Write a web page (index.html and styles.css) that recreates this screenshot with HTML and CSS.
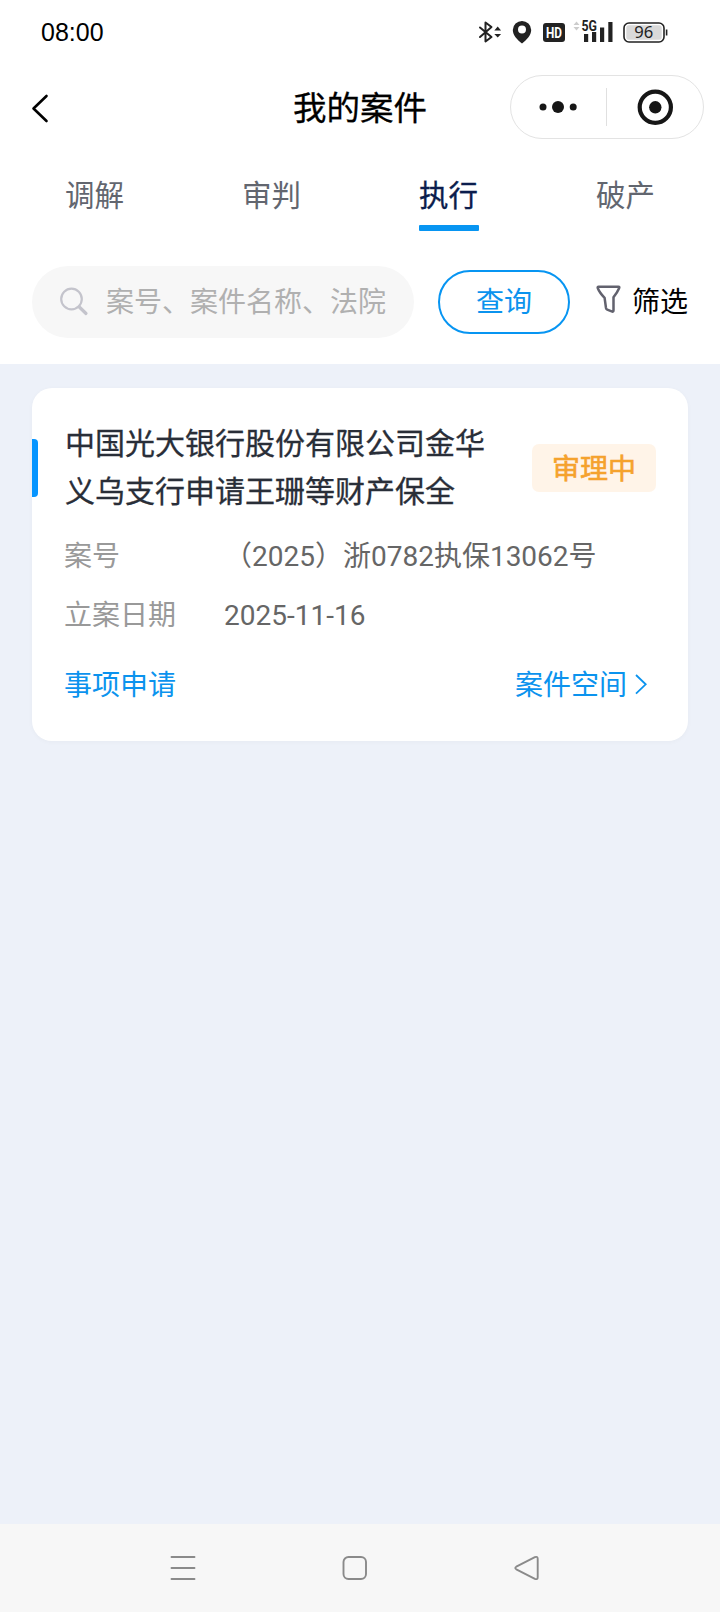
FILE: index.html
```html
<!DOCTYPE html>
<html lang="zh-CN">
<head>
<meta charset="utf-8">
<title>我的案件</title>
<link rel="stylesheet" href="styles.css">
</head>
<body>
<div class="app">
  <header class="status">
    <span class="clock">08:00</span>
    <svg class="status-icons" width="196" height="32" viewBox="476 16 196 32">
      <g fill="none" stroke="#222" stroke-width="2" stroke-linejoin="round" stroke-linecap="round">
        <path d="M480 27.500L491.500 37L485.500 41.500V22.500L491.500 27L480 37"/>
      </g>
      <path d="M494.300 30.500L497.700 26.500L501.100 30.500ZM494.300 34L497.700 37.500L501.100 34Z" fill="#222"/>
      <path fill-rule="evenodd" d="M522 21A9.200 9.200 0 0 0 512.800 30C512.800 35 517 39.500 522 43.500C527 39.500 531.200 35 531.200 30A9.200 9.200 0 0 0 522 21ZM522 25.500A4 4 0 1 1 522 33.500A4 4 0 1 1 522 25.500Z" fill="#222"/>
      <rect x="543" y="23" width="22" height="19" rx="3" fill="#222"/>
      <text x="546" y="38" class="hd" textLength="16" lengthAdjust="spacingAndGlyphs">HD</text>
      <path d="M573.500 25L576.500 21.500L579.500 25ZM573.500 27L576.500 30.500L579.500 27Z" fill="#ccc"/>
      <text x="581.500" y="31" class="net" textLength="15.500" lengthAdjust="spacingAndGlyphs">5G</text>
      <path d="M584 34h4.200v8h-4.200zM592 32h4.200v10h-4.200zM600 27.500h4.200v14.500h-4.200zM608.300 22h4.200v20h-4.200z" fill="#222"/>
      <rect x="624" y="23" width="40" height="19" rx="5" fill="#fff" stroke="#222" stroke-width="1.600"/>
      <rect x="626.300" y="25.300" width="35.400" height="14.400" rx="2.500" fill="#d9d9d9"/>
      <path d="M666.600 29.500v6" stroke="#222" stroke-width="1.600"/>
      <text x="634.300" y="38.300" class="level" textLength="19" lengthAdjust="spacingAndGlyphs">96</text>
    </svg>
  </header>

  <div class="titlebar">
    <svg class="back" width="20" height="32" viewBox="0 0 20 32"><path d="M15.500 4L2.500 16.500L15.500 29" fill="none" stroke="#000" stroke-width="2.600" stroke-linecap="round" stroke-linejoin="round"/></svg>
    <h1 class="title">我的案件</h1>
    <div class="capsule">
      <svg width="96" height="62" viewBox="0 0 96 62"><g fill="#161616"><circle cx="32" cy="31" r="3.500"/><circle cx="47" cy="31" r="6"/><circle cx="62.200" cy="31" r="3.500"/></g></svg>
      <span class="divider"></span>
      <svg width="95" height="62" viewBox="0 0 95 62"><circle cx="48.300" cy="31.300" r="15.600" fill="none" stroke="#161616" stroke-width="4.200"/><circle cx="48.300" cy="31.300" r="6.200" fill="#161616"/></svg>
    </div>
  </div>

  <nav class="tabs">
    <a class="tab">调解</a>
    <a class="tab">审判</a>
    <a class="tab active">执行</a>
    <a class="tab">破产</a>
  </nav>

  <section class="search-row">
    <div class="search">
      <svg width="30" height="30" viewBox="0 0 30 30" fill="none" stroke="#c4c4cc"><circle cx="11.500" cy="12" r="10.300" stroke-width="2.200"/><path d="M19.300 20L26 26.500" stroke-width="3.200" stroke-linecap="round"/></svg>
      <span class="placeholder">案号、案件名称、法院</span>
    </div>
    <button class="query">查询</button>
    <div class="filter">
      <svg width="25" height="29" viewBox="0 0 25 29"><path d="M2.600 1.700H22.400Q23.800 1.700 23.100 3.200Q21.500 7 17.500 12.300V25.200Q17.500 27.200 15.700 26.400L11.200 24.600Q10.200 24.200 10 23L8.600 12.800Q3.500 7.500 1.800 3.200Q1.300 1.700 2.600 1.700Z" fill="none" stroke="#62626e" stroke-width="2.500" stroke-linejoin="round"/></svg>
      <span class="filter-text">筛选</span>
    </div>
  </section>

  <main class="content">
    <article class="card">
      <div class="card-head">
        <span class="marker"></span>
        <h2 class="case-name">中国光大银行股份有限公司金华义乌支行申请王珊等财产保全</h2>
        <span class="badge">审理中</span>
      </div>
      <dl class="info">
        <dt>案号</dt><dd>（2025）浙0782执保13062号</dd>
        <dt>立案日期</dt><dd>2025-11-16</dd>
      </dl>
      <div class="actions">
        <a class="link">事项申请</a>
        <a class="link space">案件空间
          <svg width="12" height="22" viewBox="0 0 12 22"><path d="M1 1L10.700 10.300L1 19.600" fill="none" stroke="#0b93ee" stroke-width="1.800"/></svg>
        </a>
      </div>
    </article>
  </main>

  <footer class="navbar">
    <svg width="26" height="26" viewBox="0 0 26 26"><path d="M1.500 2h23M1.500 13h23M1.500 24h23"/></svg>
    <svg width="26" height="26" viewBox="0 0 26 26"><rect x="1.500" y="2" width="22.500" height="22" rx="5"/></svg>
    <svg width="26" height="26" viewBox="0 0 26 26"><path d="M2.300 11.700L20.900 2.200Q23.700 1 23.700 3.800V22.200Q23.700 25 20.900 23.800L2.300 14.300Q.3 13 2.300 11.700Z"/></svg>
  </footer>
</div>
</body>
</html>
```
FILE: styles.css
```css
* { box-sizing: border-box; }
body { margin: 0; background: #fff; font-family: Roboto, "Noto Sans CJK SC", sans-serif; }
h1, h2, dl, dd { margin: 0; font-weight: 400; }
svg { display: block; flex: none; }
.app { display: flex; flex-direction: column; width: 720px; height: 1612px; overflow: hidden; }

.status { display: flex; justify-content: space-between; height: 64px; padding: 16px 48px 0 41px; }
.clock { font-family: "Liberation Sans", Arial, sans-serif; font-size: 25px; line-height: 33px; color: #000; }
.hd { font: 700 15px Roboto, sans-serif; fill: #fff; }
.net { font: 700 14.500px Roboto, sans-serif; fill: #222; }
.level { font: 400 17px "Noto Sans", sans-serif; fill: #222; }

.titlebar { display: grid; grid-template-columns: 209px 240px 1fr; align-items: center; height: 86px; padding: 0 16px 0 31px; }
.back { margin-top: 1px; }
.title { padding-top: 3px; font-size: 33.500px; line-height: 48px; text-align: center; color: #000; -webkit-text-stroke: .3px #000; }
.capsule { display: flex; align-items: center; justify-self: end; width: 194px; height: 64px; border: 1px solid #e3e3e3; border-radius: 32px; }
.divider { width: 1px; height: 38px; margin-left: -1px; background: #e0e0e0; }

.tabs { display: flex; height: 81px; padding: 0 6px; }
.tab { flex: 1; display: flex; flex-direction: column; align-items: center; padding-top: 24px; font-size: 29.500px; line-height: 44px; color: #62666f; }
.tab.active { color: #0b1d4d; -webkit-text-stroke: .3px #0b1d4d; }
.tab.active::after { content: ""; width: 60px; height: 6px; margin-top: 7px; border-radius: 1px; background: #0795f2; }

.search-row { display: flex; align-items: flex-start; height: 133px; padding: 35px 32px 0; }
.search { display: flex; align-items: center; width: 382px; height: 72px; padding-left: 28px; border-radius: 36px; background: #f7f7f7; }
.placeholder { margin-left: 16px; padding-top: 2px; font-size: 28px; line-height: 40px; color: #b0b0b0; white-space: nowrap; }
.query { width: 132px; height: 64px; margin: 4px 0 0 24px; padding: 2px 0 0; border: 2px solid #0795f2; border-radius: 32px; background: #fff; color: #0b93ee; font: 400 28px/40px Roboto, "Noto Sans CJK SC", sans-serif; }
.filter { display: flex; align-items: center; height: 72px; margin-left: 26px; }
.filter svg { margin-top: -5px; }
.filter-text { margin-left: 11px; padding-top: 2px; font-size: 28px; line-height: 40px; color: #000; white-space: nowrap; }

.content { flex: 1; padding: 24px 32px; background: #edf1f9; }
.card { height: 353px; padding-top: 32px; border-radius: 20px; background: #fff; box-shadow: 0 1px 5px rgba(0, 0, 0, .03); }
.card-head { display: flex; align-items: center; height: 96px; }
.marker { width: 6px; height: 58px; border-radius: 0 4px 4px 0; background: #0795ff; }
.case-name { width: 424px; margin-left: 27px; font-size: 30px; line-height: 48px; color: #292e38; -webkit-text-stroke: .3px #292e38; }
.badge { width: 124px; height: 48px; margin-left: 43px; border-radius: 7px; background: #fff4e8; color: #f5a22d; font-size: 28px; line-height: 51px; text-align: center; -webkit-text-stroke: .6px #f5a22d; }
.info { display: grid; grid-template-columns: 160px 1fr; row-gap: 19px; margin: 21px 0 0 32px; font-size: 28px; line-height: 40px; }
.info dt { color: #999; }
.info dd { color: #666; }
.actions { display: flex; justify-content: space-between; margin: 29px 41px 0 32px; }
.link { display: flex; align-items: center; font-size: 28px; line-height: 40px; color: #0b93ee; }
.space { padding-top: 1px; }
.space svg { margin-left: 8px; margin-top: -2px; }

.navbar { display: flex; align-items: center; justify-content: center; gap: 146px; height: 88px; padding-right: 10px; background: #f7f7f7; }
.navbar svg { fill: none; stroke: #8a8a8a; stroke-width: 1.900; stroke-linecap: round; stroke-linejoin: round; }
```
